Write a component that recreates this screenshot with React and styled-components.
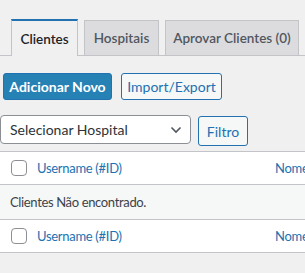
import React from 'react'
import styled, { createGlobalStyle } from 'styled-components'

const Global = createGlobalStyle`
  html, body {
    margin: 0;
    padding: 0;
    overflow: hidden;
    background: #f0f0f1;
    font-family: Lato, "Open Sans", sans-serif;
    color: #3c434a;
  }
`

const Page = styled.div`
  width: 305px;
  height: 273px;
  overflow: hidden;
`

const TabBar = styled.div`
  display: flex;
  align-items: flex-end;
  gap: 6px;
  height: 56px;
  padding-left: 11px;
  border-bottom: 1px solid #c3c4c7;
  box-sizing: border-box;
`

const Tab = styled.div`
  display: flex;
  align-items: center;
  box-sizing: border-box;
  width: ${p => p.w}px;
  justify-content: center;
  font-size: 13.5px;
  font-weight: 600;
  white-space: nowrap;
  border: 1px solid #c3c4c7;
  border-bottom: none;
  background: ${p => (p.active ? '#f0f0f1' : '#dcdcde')};
  color: ${p => (p.active ? '#1d2327' : '#50575e')};
  height: ${p => (p.active ? 37 : 35)}px;
  margin-bottom: ${p => (p.active ? -1 : 0)}px;
  border-top: ${p => (p.active ? '2px solid #2271b1' : '1px solid #c3c4c7')};
`

const Actions = styled.div`
  display: flex;
  gap: 9px;
  padding: 17px 0 0 3px;
`

const Button = styled.button`
  box-sizing: border-box;
  height: 27px;
  width: ${p => p.w}px;
  padding: 0;
  border-radius: 3px;
  font-family: inherit;
  font-size: 14px;
  border: 1px solid #2271b1;
  background: ${p => (p.primary ? '#2681b4' : '#f6f7f7')};
  color: ${p => (p.primary ? '#fff' : '#2271b1')};
  font-weight: ${p => (p.primary ? 700 : 400)};
  white-space: nowrap;
`

const FilterRow = styled.div`
  display: flex;
  align-items: flex-start;
  gap: 7px;
  padding-top: 15px;
`

const Select = styled.div`
  box-sizing: border-box;
  width: 191px;
  height: 29px;
  display: flex;
  align-items: center;
  justify-content: space-between;
  padding: 0 8px 0 9px;
  border: 1px solid #8c8f94;
  border-radius: 4px;
  background: #fff;
  font-size: 14px;
  color: #2c3338;
`

const FilterButton = styled(Button)`
  height: 30px;
  margin-top: 1px;
`

const Table = styled.table`
  margin-top: 5px;
  width: 340px;
  border-collapse: collapse;
  table-layout: fixed;
  background: #fff;
  font-size: 13px;
  border-top: 1px solid #c3c4c7;
  border-bottom: 1px solid #c3c4c7;
`

const Row = styled.tr`
  height: ${p => p.h}px;
  background: ${p => (p.alt ? '#f6f7f7' : '#fff')};
  border-bottom: 1px solid #c3c4c7;
`

const CheckCell = styled.td`
  width: 27px;
  padding: 0 0 0 11px;
  box-sizing: border-box;
  vertical-align: middle;
`

const Cell = styled.td`
  width: ${p => (p.w ? `${p.w}px` : 'auto')};
  padding: 0 0 0 10px;
  vertical-align: middle;
  white-space: nowrap;
  overflow: hidden;
`

const HeadLink = styled.span`
  color: #2271b1;
  font-size: 13px;
  letter-spacing: -0.3px;
`

const Check = styled.span`
  display: block;
  width: 16px;
  height: 16px;
  box-sizing: border-box;
  border: 1px solid #8c8f94;
  border-radius: 4px;
  background: #fff;
`

const Empty = styled.td`
  padding: 0 0 0 10px;
  color: #3c434a;
  font-size: 13px;
  letter-spacing: -0.35px;
`

function Chevron() {
  return (
    <svg width="12" height="8" viewBox="0 0 12 8">
      <polyline points="1.5,1.5 6,6 10.5,1.5" fill="none" stroke="#50575e" strokeWidth="1.6" />
    </svg>
  )
}

function HeaderRow() {
  return (
    <Row h={33}>
      <CheckCell><Check /></CheckCell>
      <Cell w={228}><HeadLink>Username (#ID)</HeadLink></Cell>
      <Cell><HeadLink>Nome</HeadLink></Cell>
    </Row>
  )
}

export default function App() {
  return (
    <Page>
      <Global />
      <TabBar>
        <Tab active w={67}>Clientes</Tab>
        <Tab w={75}>Hospitais</Tab>
        <Tab w={134}>Aprovar Clientes (0)</Tab>
      </TabBar>
      <Actions>
        <Button primary w={109}>Adicionar Novo</Button>
        <Button w={101}>Import/Export</Button>
      </Actions>
      <FilterRow>
        <Select>
          <span>Selecionar Hospital</span>
          <Chevron />
        </Select>
        <FilterButton w={50}>Filtro</FilterButton>
      </FilterRow>
      <Table>
        <thead>
          <HeaderRow />
        </thead>
        <tbody>
          <Row h={35} alt>
            <Empty colSpan={3}>Clientes Não encontrado.</Empty>
          </Row>
        </tbody>
        <tfoot>
          <HeaderRow />
        </tfoot>
      </Table>
    </Page>
  )
}
